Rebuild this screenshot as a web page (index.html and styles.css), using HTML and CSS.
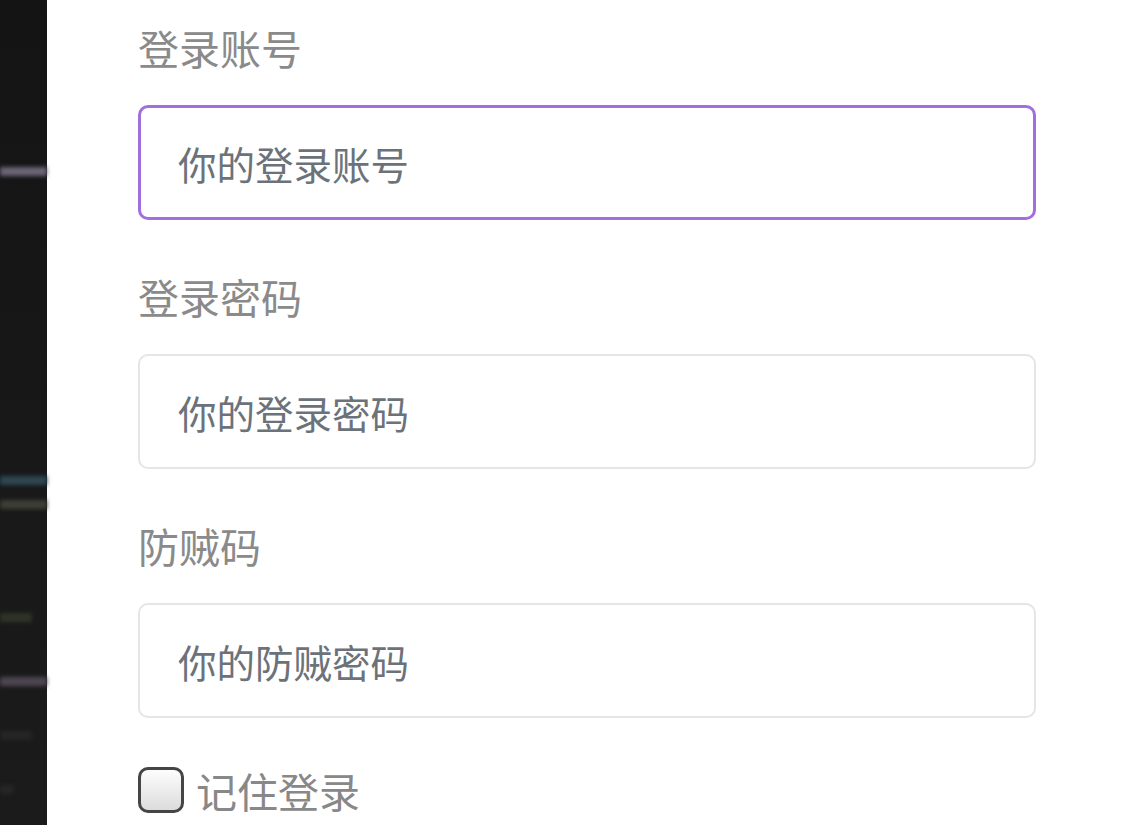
FILE: index.html
```html
<!DOCTYPE html>
<html lang="zh-CN">
<head>
  <meta charset="UTF-8">
  <title>登录</title>
  <link rel="stylesheet" href="styles.css">
</head>
<body>
  <div class="page">
    <div class="backdrop">
      <div class="streak lavender" style="margin-top:167px"></div>
      <div class="streak teal" style="margin-top:300px"></div>
      <div class="streak olive" style="margin-top:15px"></div>
      <div class="streak moss short" style="margin-top:104px"></div>
      <div class="streak plum" style="margin-top:55px"></div>
      <div class="streak dim short" style="margin-top:45px"></div>
      <div class="streak dim tiny" style="margin-top:45px"></div>
    </div>
    <form class="panel">
      <label class="field-label" for="account">登录账号</label>
      <input class="field focused" id="account" type="text" placeholder="你的登录账号">
      <label class="field-label" for="password">登录密码</label>
      <input class="field" id="password" type="password" placeholder="你的登录密码">
      <label class="field-label" for="guard">防贼码</label>
      <input class="field" id="guard" type="text" placeholder="你的防贼密码">
      <label class="remember">
        <input type="checkbox" class="check">
        <span>记住登录</span>
      </label>
    </form>
  </div>
</body>
</html>
```

FILE: styles.css
```css
html, body { margin: 0; height: 100%; overflow: hidden; }
body { font-family: "Noto Sans CJK SC", "Noto Sans", sans-serif; background: #fff; }
.page { display: flex; height: 100%; }
.backdrop { width: 47px; flex-shrink: 0; background: linear-gradient(#141414, #1b1b1b); display: flex; flex-direction: column; }
.streak { height: 9px; filter: blur(2px); }
.streak.short { width: 32px; }
.streak.tiny { width: 14px; }
.lavender { background: #6b6578; }
.teal { background: #2e4852; }
.olive { background: #3e3f35; }
.moss { background: #2f3427; }
.plum { background: #4d4754; }
.dim { background: #262626; }
.panel { flex: 1; padding: 23px 89px 0 91px; display: flex; flex-direction: column; }
.field-label { font-size: 41px; line-height: 48px; color: #8a8a8a; margin-bottom: 34px; }
.field { box-sizing: border-box; height: 115px; border: 2px solid #e5e5e5; border-radius: 10px; padding: 0 0 0 38px; font-family: inherit; font-size: 38.5px; color: #333; background: #fff; outline: none; margin-bottom: 52px; }
.field::placeholder { color: #6c727a; }
.field.focused { border: 3px solid #a16fe0; padding-left: 37px; }
.remember { display: flex; align-items: center; gap: 12px; font-size: 41px; line-height: 48px; color: #888; margin-top: -4px; }
.check { appearance: none; margin: 0; width: 46px; height: 46px; box-sizing: border-box; border: 3px solid #454545; border-radius: 10px; background: linear-gradient(#fdfdfd, #dcdcdc); }
```
